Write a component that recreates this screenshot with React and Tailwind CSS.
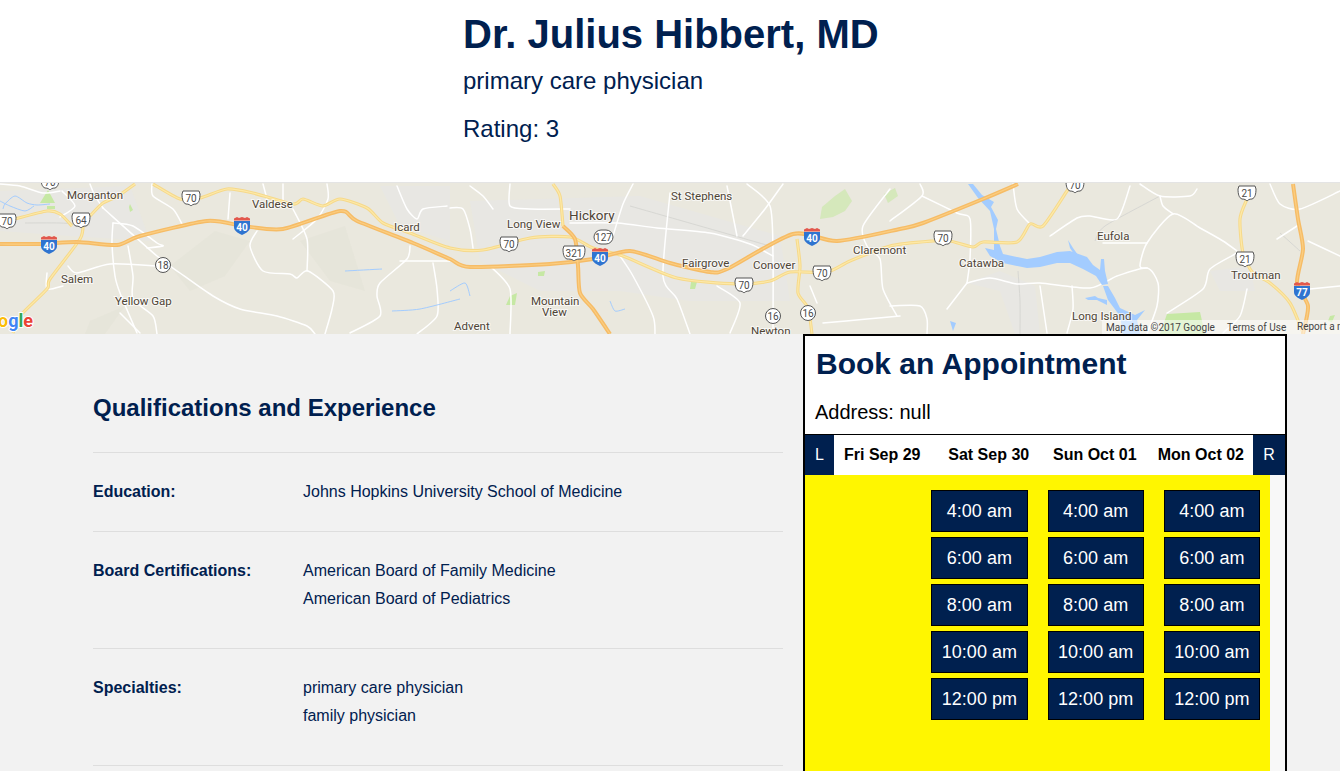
import React from 'react';

const whiteRoads = [
  '103,207 157,255 180,272 213,295 240,308 277,315 307,325 315,333',
  '113,222 112,242 115,275 120,292 137,332',
  '68,265 77,272 110,263 157,265',
  '128,245 133,275 133,298 153,315 157,333',
  '257,230 250,245 263,270 290,273 297,277 308,270 333,290 332,308 325,333',
  '293,208 307,238 307,270',
  '400,260 450,260',
  '410,245 407,258 380,282 377,295 380,315 350,332',
  '433,262 437,288 437,315 417,333',
  '397,185 407,208 417,218 423,208 447,205',
  '152,183 153,195 173,208 183,225',
  '230,192 228,218',
  '263,183 267,198',
  '283,183 283,205',
  '327,183 328,198 317,218 293,238',
  '0,183 20,185 43,192 60,190',
  '47,272 47,288 63,285',
  '120,312 140,332',
  '113,222 133,225 157,242 163,245 147,247',
  '90,183 95,195 103,207',
  '62,190 75,205 60,216',
  '470,185 483,195 493,208',
  '450,207 463,208 470,228 473,247',
  '490,265 510,288 510,333',
  '510,183 510,205 530,208 570,208',
  '570,222 617,222 657,227 710,232 750,243 773,255',
  '633,183 623,203 613,235',
  '670,192 663,275 677,298 690,333',
  '747,183 770,205 773,255 773,333',
  '727,185 737,235',
  '783,183 765,208 743,235',
  '890,188 863,225 867,245 880,258 883,288 897,315',
  '620,255 633,275 653,315 655,333',
  '717,285 740,302 730,332',
  '810,285 817,302',
  '823,322 867,318 900,315',
  '890,220 922,195 920,183',
  '922,195 957,212 970,218 970,258 967,282',
  '967,282 990,277 1017,283 1040,282 1090,287 1117,275 1147,267 1158,282 1157,305 1147,333',
  '1147,267 1140,265 1147,242 1173,213 1200,227 1223,240 1237,250',
  '1013,183 1017,208 1030,223',
  '1050,235 1077,217 1090,215 1117,218 1130,185',
  '1103,242 1147,242',
  '1160,195 1163,205 1173,213',
  '1140,183 1160,195 1190,195 1197,188',
  '1237,252 1210,268 1203,288 1167,312',
  '890,305 920,305 927,318 927,333',
  '947,308 967,282',
  '1040,285 1047,332',
  '1072,285 1073,308 1067,332',
  '1247,288 1240,315 1223,332',
  '1270,183 1280,203 1300,208 1340,190',
  '1277,238 1297,225',
  '1310,288 1340,285',
  '1308,240 1340,255',
];

const yellowRoads = [
  '15,218 47,210 60,213 72,225',
  '90,215 103,202 118,195 135,183',
  '153,183 180,198 200,197 227,188 253,192 293,203 303,198 323,205 340,198 367,207 383,222 410,232 450,247 483,249 530,237 570,236 593,247 623,255 677,277 737,283 770,280 790,271 827,271 850,260 890,245 933,240 950,240 973,246 983,241 1017,241 1030,223 1043,225 1067,190 1072,183',
  '83,222 80,238 50,278 47,288 20,315 13,332',
  '553,183 560,195 563,225',
  '797,238 800,265 798,292 808,307 812,333',
  '1247,198 1240,218 1243,252 1253,272 1270,282 1290,302 1303,332',
];

const orangeRoads = [
  '0,243 40,243 77,241 117,244 140,235 207,220 243,225 283,228 340,210 357,220 413,242 450,258 470,266 550,263 593,258 630,250 670,262 710,271 727,268 793,233 837,240 900,228 923,222 983,198 1018,183',
  '1293,183 1298,218 1303,248 1297,282 1308,305 1303,333',
  '563,225 575,238 578,265 580,292 593,308 610,333',
];

const labels = [
  ['Morganton', 67, 198],
  ['Valdese', 252, 207],
  ['Icard', 394, 230],
  ['Salem', 61, 282],
  ['Yellow Gap', 115, 304],
  ['Long View', 507, 227],
  ['St Stephens', 671, 199],
  ['Fairgrove', 682, 266],
  ['Conover', 753, 268],
  ['Claremont', 853, 253],
  ['Mountain', 531, 304],
  ['View', 542, 315],
  ['Advent', 454, 329],
  ['Newton', 751, 334],
  ['Catawba', 959, 266],
  ['Eufola', 1097, 239],
  ['Troutman', 1231, 278],
  ['Long Island', 1072, 319],
];

const usShields = [
  ['70', 7, 220], ['70', 50, 181], ['70', 191, 197], ['64', 81, 219], ['70', 509, 243],
  ['321', 574, 252], ['70', 744, 284], ['70', 822, 272], ['70', 943, 237], ['70', 1075, 184],
  ['21', 1247, 192], ['21', 1245, 258],
];

const circleShields = [['18', 163, 264], ['16', 773, 315], ['16', 808, 312]];

const interstates = [['40', 49, 244], ['40', 242, 225], ['40', 600, 256], ['40', 812, 236], ['77', 1302, 290]];

// turns "x,y x,y ..." into a smooth path so the roads don't look jagged
const smooth = (str) => {
  const p = str.split(' ').map((s) => s.split(',').map(Number));
  let d = `M${p[0][0]},${p[0][1]}`;
  for (let i = 0; i < p.length - 1; i++) {
    const a = p[i - 1] || p[i];
    const b = p[i];
    const c = p[i + 1];
    const e = p[i + 2] || c;
    const c1 = [b[0] + (c[0] - a[0]) / 8, b[1] + (c[1] - a[1]) / 8];
    const c2 = [c[0] - (e[0] - b[0]) / 8, c[1] - (e[1] - b[1]) / 8];
    d += ` C${c1[0]},${c1[1]} ${c2[0]},${c2[1]} ${c[0]},${c[1]}`;
  }
  return d;
};

const UsShield = ({ n, x, y }) => {
  const w = n.length > 2 ? 11 : 9;
  return (
    <g transform={`translate(${x},${y})`}>
      <path
        d={`M${-w + 1},-7 L${w - 1},-7 L${w},-4 C${w},1 ${w - 1},5 ${w - 4},6 C2,6 1,7 0,8 C-1,7 -2,6 ${-w + 4},6 C${-w + 1},5 ${-w},1 ${-w},-4 Z`}
        fill="#fff"
        stroke="#555"
        strokeWidth="1"
      />
      <text x="0" y="4" textAnchor="middle" fontSize="10" fill="#4a4a4a" fontFamily="Roboto, sans-serif">{n}</text>
    </g>
  );
};

const Interstate = ({ n, x, y }) => (
  <g transform={`translate(${x},${y})`}>
    <path d="M-8,-5 L8,-5 L8,1 C8,5 4,7 0,9 C-4,7 -8,5 -8,1 Z" fill="#2f74d0" />
    <path d="M-8,-5.5 L-8,-7.5 L-5,-9 L-3,-8 L0,-9 L3,-8 L5,-9 L8,-7.5 L8,-5.5 Z" fill="#e2574c" />
    <text x="0" y="5" textAnchor="middle" fontSize="10" fontWeight="700" fill="#fff" fontFamily="Roboto, sans-serif">{n}</text>
  </g>
);

// static map, coordinates are page coordinates so the svg is shifted up by its top
const MapStrip = () => (
  <svg viewBox="0 182 1340 151" className="block w-full h-[151px]" fontFamily="Roboto, sans-serif">
    <rect x="0" y="182" width="1340" height="151" fill="#eae8de" />
    <g fill="#e8e7e3">
      <path d="M470,200 L640,195 L780,235 L790,300 L690,300 L620,290 L540,290 L480,260 Z" />
      <path d="M0,190 L130,185 L150,240 L70,235 L0,230 Z" />
      <path d="M967,282 L1000,270 L1035,285 L1040,333 L1015,333 L1000,290 Z" />
      <path d="M380,185 L450,185 L450,240 L400,225 Z" />
      <path d="M1210,270 L1250,265 L1255,290 L1220,290 Z" />
    </g>
    <g fill="#e2e0d4">
      <path d="M170,265 L215,230 L250,240 L225,275 L190,290 Z" opacity="0.4" />
      <path d="M300,240 L345,225 L365,290 L330,280 Z" opacity="0.4" />
      <path d="M90,320 L125,305 L105,333 L85,333 Z" opacity="0.4" />
    </g>
    <g fill="#c6e8a4">
      <path d="M40,202 L48,189 L55,202 Z" />
      <path d="M47,205 L55,205 L55,208 L47,208 Z" />
      <path d="M130,203 L133,209 L130,211 L129,206 Z" />
      <path d="M538,271 L545,270 L544,275 L538,275 Z" />
      <path d="M510,295 L517,292 L515,304 L506,304 Z" />
      <path d="M691,281 L697,281 L695,288 L690,288 Z" />
      <path d="M822,206 L835,195 L845,188 L852,200 L845,210 L833,216 L820,218 Z" opacity="0.6" />
      <path d="M1167,313 L1200,311 L1205,333 L1160,333 Z" />
      <path d="M884,193 L895,187 L898,195 L888,202 Z" opacity="0.6" />
      <path d="M1330,315 L1335,314 L1332,321 L1328,320 Z" />
    </g>
    <g fill="none" stroke="#d7d7d3" strokeWidth="1">
      <path d={smooth('25,222 60,222 90,224')} />
      <path d={smooth('630,205 700,225 770,245')} />
      <path d={smooth('1018,270 1020,300 1020,333')} />
      <path d={smooth('1095,240 1105,225 1160,195')} />
      <path d={smooth('1280,232 1300,250')} />
    </g>
    <g fill="none" stroke="#fff" strokeWidth="1.5" strokeLinejoin="round" strokeLinecap="round">
      {whiteRoads.map((points, i) => <path key={i} d={smooth(points)} />)}
    </g>
    <g fill="#a3ccff">
      <path d="M968,183 L973,183 L982,194 L994,201 L991,206 L998,219 L996,228 L1000,245 L1003,253 L1027,258 L1040,256 L1057,251 L1070,250 L1087,256 L1093,264 L1100,269 L1101,258 L1104,258 L1105,270 L1108,283 L1102,284 L1096,275 L1083,268 L1070,262 L1057,262 L1040,266 L1027,267 L1003,262 L990,255 L985,247 L994,249 L994,228 L990,210 L978,197 Z" />
      <path d="M1103,285 L1108,285 L1115,297 L1120,307 L1135,314 L1145,309 L1137,319 L1140,333 L1123,333 L1120,315 L1108,299 Z" />
      <path d="M1085,297 L1095,295 L1098,297 L1107,299 L1107,304 L1097,299 L1088,299 Z" />
      <path d="M1068,239 L1073,247 L1078,254 L1074,253 L1070,247 Z" />
      <path d="M950,320 L956,322 L953,330 Z" />
    </g>
    <g fill="none" stroke="#a3ccff" strokeWidth="1">
      <path d={smooth('3,208 5,203 15,195 27,202 37,204 50,203')} />
      <path d={smooth('0,200 10,205 25,210 34,205')} />
      <path d={smooth('450,290 465,282 470,295')} />
      <path d={smooth('610,300 615,310 625,308')} />
      <path d={smooth('345,270 382,268')} />
      <path d={smooth('392,310 420,308 460,298')} />
    </g>
    <g fill="none" strokeLinejoin="round">
      <g stroke="#f6d98a" strokeWidth="3.2">
        {yellowRoads.map((points, i) => <path key={i} d={smooth(points)} />)}
      </g>
      <g stroke="#fde9a8" strokeWidth="1.2">
        {yellowRoads.map((points, i) => <path key={i} d={smooth(points)} />)}
      </g>
      <g stroke="#f6bc66" strokeWidth="4">
        {orangeRoads.map((points, i) => <path key={i} d={smooth(points)} />)}
      </g>
      <g stroke="#fbce82" strokeWidth="1.2">
        {orangeRoads.map((points, i) => <path key={i} d={smooth(points)} />)}
      </g>
    </g>
    {usShields.map(([n, x, y], i) => <UsShield key={i} n={n} x={x} y={y} />)}
    {circleShields.map(([n, x, y], i) => (
      <g key={i} transform={`translate(${x},${y})`}>
        <circle r="7.5" fill="#fff" stroke="#555" />
        <text y="3.5" textAnchor="middle" fontSize="10" fill="#4a4a4a">{n}</text>
      </g>
    ))}
    <rect x="594" y="229" width="19" height="14" rx="7" fill="#fff" stroke="#555" />
    <text x="603.5" y="240" textAnchor="middle" fontSize="10" fill="#4a4a4a">127</text>
    {interstates.map(([n, x, y], i) => <Interstate key={i} n={n} x={x} y={y} />)}
    <g fontSize="11.5" fill="#4f4536" stroke="#fff" strokeWidth="2" strokeOpacity="0.7" style={{ paintOrder: 'stroke' }}>
      {labels.map(([t, x, y]) => <text key={t} x={x} y={y}>{t}</text>)}
      <text x="569" y="219" fontSize="13.5">Hickory</text>
    </g>
    <text x="33" y="326" textAnchor="end" fontSize="18" fontWeight="700" stroke="#fff" strokeWidth="2" style={{ paintOrder: 'stroke' }}>
      <tspan fill="#fbbc05">o</tspan>
      <tspan fill="#4285f4">g</tspan>
      <tspan fill="#34a853">l</tspan>
      <tspan fill="#ea4335">e</tspan>
    </text>
    <rect x="1102" y="319" width="238" height="14" fill="#fff" fillOpacity="0.55" />
    <g fontSize="10" fill="#444">
      <text x="1106" y="330">Map data ©2017 Google</text>
      <text x="1227" y="330">Terms of Use</text>
      <text x="1297" y="329">Report a map error</text>
    </g>
  </svg>
);

const qualifications = [
  { label: 'Education:', values: ['Johns Hopkins University School of Medicine'], pad: 'pb-[25px]' },
  { label: 'Board Certifications:', values: ['American Board of Family Medicine', 'American Board of Pediatrics'], pad: 'pb-[35px]' },
  { label: 'Specialties:', values: ['primary care physician', 'family physician'], pad: 'pb-[35px]' },
];

const days = ['Fri Sep 29', 'Sat Sep 30', 'Sun Oct 01', 'Mon Oct 02'];
const times = ['4:00 am', '6:00 am', '8:00 am', '10:00 am', '12:00 pm'];

const App = () => {
  return (
    <div className="h-screen overflow-hidden bg-[#f2f2f2] font-['Liberation_Sans',Arial,sans-serif] text-[#00204f]">
      <header className="h-[182px] bg-white pl-[463px] pt-[10px]">
        <h1 className="text-[40px] leading-[48px] font-bold">Dr. Julius Hibbert, MD</h1>
        <p className="text-[24px] leading-[28px] mt-[9px]">primary care physician</p>
        <p className="text-[24px] leading-[28px] mt-[20px]">Rating: 3</p>
      </header>

      <div className="h-[152px] border-t border-[#e4e4e4]">
        <MapStrip />
      </div>

      <div className="flex">
        <main className="w-[803px] pl-[93px] pr-[20px] pt-[58px]">
          <h2 className="text-[24px] leading-[32px] font-bold mb-[28px]">Qualifications and Experience</h2>
          {qualifications.map((row) => (
            <div key={row.label} className={`flex border-t border-[#dedede] pt-[25px] ${row.pad}`}>
              <div className="w-[210px] text-[16px] leading-[28px] font-bold">{row.label}</div>
              <div className="text-[16px] leading-[28px]">
                {row.values.map((v) => <div key={v}>{v}</div>)}
              </div>
            </div>
          ))}
          <div className="border-t border-[#dedede]" />
        </main>

        <aside className="w-[484px] h-[500px] border-2 border-black bg-white">
          <h2 className="text-[30px] leading-[34px] font-bold pl-[11px] pt-[11px]">Book an Appointment</h2>
          <p className="text-[20px] leading-[24px] text-black pl-[10px] pt-[19px] pb-[10px]">Address: null</p>
          <div className="flex h-[41px] border-t border-black text-[16px] font-bold text-black">
            <div className="w-[29px] flex items-center justify-center bg-[#00204f] text-white font-normal">L</div>
            <div className="flex-1 grid grid-cols-4 items-center">
              {days.map((d) => <div key={d} className="pl-[9.5px] first:pl-[10px]">{d}</div>)}
            </div>
            <div className="w-[32px] flex items-center justify-center bg-[#00204f] text-white font-normal">R</div>
          </div>
          <div className="flex h-[300px]">
            <div className="w-[465px] bg-[#fff600] grid grid-cols-4 content-start pt-[15px]">
              <div />
              {[0, 1, 2].map((col) => (
                <div key={col} className="px-[10px] flex flex-col gap-[5px]">
                  {times.map((t) => (
                    <div key={t} className="h-[42px] flex items-center justify-center bg-[#00204f] border border-black text-white text-[18px]">
                      {t}
                    </div>
                  ))}
                </div>
              ))}
            </div>
            <div className="flex-1 bg-[#f8f8f8]" />
          </div>
        </aside>
      </div>
    </div>
  );
};

export default App;
